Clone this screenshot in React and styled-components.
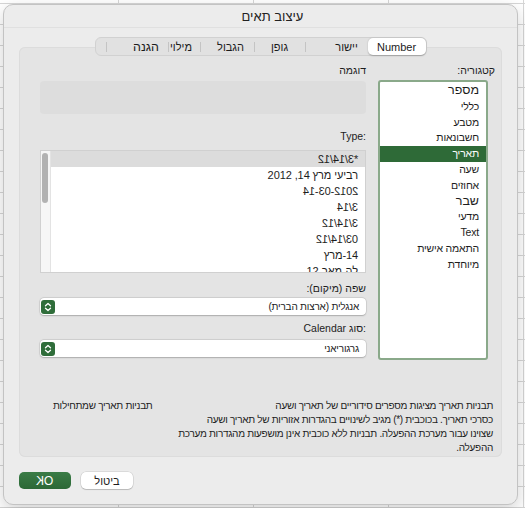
import React from 'react'
import styled, { createGlobalStyle } from 'styled-components'

const GlobalStyle = createGlobalStyle`
  html, body {
    margin: 0;
    padding: 0;
  }
  body {
    font-family: "Liberation Sans", "DejaVu Sans", Arial, sans-serif;
    color: #1d1d1d;
    background: #fff;
  }
`

// each string picks its own direction from its first strong letter
const T = ({ children }) => <Txt dir="auto">{children}</Txt>

const Stepper = () => (
	<StepperBox>
		<svg width="8" height="10" viewBox="0 0 8 10" fill="none">
			<path d="M1.5 3.8 4 1.5l2.5 2.3M1.5 6.2 4 8.5l2.5-2.3" stroke="#fff" strokeWidth="1.3" strokeLinecap="round" strokeLinejoin="round" />
		</svg>
	</StepperBox>
)

const tabs = [
	{ label: 'Number', width: 58, selected: true },
	{ label: 'יישור', width: 62, shift: 20 },
	{ label: 'גופן', width: 50, sep: true },
	{ label: 'הגבול', width: 53, sep: true, shift: 7 },
	{ label: 'מילוי', width: 31, sep: true, shift: -6 },
	{ label: 'הגנה', width: 61, sep: true, shift: 18, big: true },
	{ label: '', width: 10, sep: true },
]

const categories = [
	{ label: 'מספר', big: true },
	{ label: 'כללי' },
	{ label: 'מטבע' },
	{ label: 'חשבונאות' },
	{ label: 'תאריך', selected: true },
	{ label: 'שעה' },
	{ label: 'אחוזים' },
	{ label: 'שבר', big: true },
	{ label: 'מדעי' },
	{ label: 'Text' },
	{ label: 'התאמה אישית' },
	{ label: 'מיוחדת' },
]

const types = [
	{ flip: '*3/14/12', selected: true },
	{ text: 'רביעי מרץ 14, 2012' },
	{ flip: '2012-03-14' },
	{ flip: '3/14' },
	{ flip: '3/14/12' },
	{ flip: '03/14/12' },
	{ text: '14-מרץ' },
	{ text: 'לה-מאר-12' },
]

const App = () => {
	return (
		<Sheet>
			<GlobalStyle />
			<Dialog dir="rtl">
				<TitleBar>עיצוב תאים</TitleBar>
				<Body>
					<TabBar>
						{tabs.map((t, i) => (
							<React.Fragment key={i}>
								{t.sep && <TabSep />}
								<Tab width={t.width} shift={t.shift || 0} selected={t.selected} big={t.big}>
									<T>{t.label}</T>
								</Tab>
							</React.Fragment>
						))}
					</TabBar>
					<Panel>
						<Columns>
							<CategoryColumn>
								<CategoryLabel>
									<T>קטגוריה:</T>
								</CategoryLabel>
								<CategoryList>
									{categories.map(c => (
										<CategoryItem key={c.label} big={c.big} selected={c.selected}>
											<T>{c.label}</T>
										</CategoryItem>
									))}
								</CategoryList>
							</CategoryColumn>
							<MainColumn>
								<FieldLabel>
									<T>דוגמה</T>
								</FieldLabel>
								<SampleBox />
								<FieldLabel gap={15}>
									<T>Type:</T>
								</FieldLabel>
								<TypeList>
									<TypeRows>
										{types.map((t, i) => (
											<TypeRow key={i} selected={t.selected}>
												{t.flip ? <Flip dir="ltr">{t.flip}</Flip> : <T>{t.text}</T>}
											</TypeRow>
										))}
									</TypeRows>
									<ScrollTrack>
										<ScrollThumb />
									</ScrollTrack>
								</TypeList>
								<FieldLabel gap={8}>
									<T>שפה (מיקום):</T>
								</FieldLabel>
								<Select gap={3}>
									<T>אנגלית (ארצות הברית)</T>
									<Stepper />
								</Select>
								<FieldLabel gap={6}>
									<T>Calendar סוג:</T>
								</FieldLabel>
								<Select gap={5}>
									<T>גרגוריאני</T>
									<Stepper />
								</Select>
							</MainColumn>
						</Columns>
						<Description>
							<DescLine spread>
								<T>תבניות תאריך מציגות מספרים סידוריים של תאריך ושעה</T>
								<T>תבניות תאריך שמתחילות</T>
							</DescLine>
							<DescLine>
								<T>כסרכי תאריך. בכוכבית (*) מגיב לשינויים בהגדרות אזוריות של תאריך ושעה</T>
							</DescLine>
							<DescLine>
								<T>שצוינו עבור מערכת ההפעלה. תבניות ללא כוכבית אינן מושפעות מהגדרות מערכת</T>
							</DescLine>
							<DescLine>
								<T>ההפעלה.</T>
							</DescLine>
						</Description>
					</Panel>
					<Buttons>
						<CancelButton>
							<T>ביטול</T>
						</CancelButton>
						<OkButton>
							<Flip dir="ltr">OK</Flip>
						</OkButton>
					</Buttons>
				</Body>
			</Dialog>
		</Sheet>
	)
}

const Txt = styled.span`
	white-space: nowrap;
`

const Flip = styled.span`
	display: inline-block;
	transform: scaleX(-1);
	unicode-bidi: isolate;
`

const Sheet = styled.div`
	width: 525px;
	height: 508px;
	box-sizing: border-box;
	padding: 4px 7px 3px 3px;
	overflow: hidden;
	background-color: #fff;
	background-image: linear-gradient(#d6d6d6 1px, transparent 1px),
		linear-gradient(90deg, #d6d6d6 1px, transparent 1px);
	background-size: 135px 21px;
	background-position: -17px -18px;
`

const Dialog = styled.div`
	height: 100%;
	box-sizing: border-box;
	display: flex;
	flex-direction: column;
	background: #ececec;
	border: 1px solid #c3c3c3;
	border-radius: 10px;
	box-shadow: 0 6px 18px rgba(0, 0, 0, 0.18);
	overflow: hidden;
`

const TitleBar = styled.div`
	height: 22px;
	flex: none;
	display: flex;
	align-items: center;
	justify-content: center;
	padding-left: 24px;
	font-size: 13px;
	color: #222;
	border-bottom: 1px solid #e0e0e0;
`

const Body = styled.div`
	flex: 1;
	display: flex;
	flex-direction: column;
	padding: 9px 15px 0;
`

const TabBar = styled.div`
	align-self: center;
	display: flex;
	align-items: center;
	height: 19px;
	box-sizing: border-box;
	background: #e1e1e1;
	border: 1px solid #d1d1d1;
	border-radius: 6px;
	margin-bottom: -9px;
	position: relative;
	z-index: 1;
`

const Tab = styled.div`
	width: ${p => p.width}px;
	height: 17px;
	box-sizing: border-box;
	display: flex;
	align-items: center;
	justify-content: center;
	padding-left: ${p => (p.shift > 0 ? p.shift : 0)}px;
	padding-right: ${p => (p.shift < 0 ? -p.shift : 0)}px;
	font-size: ${p => (p.big ? 12.5 : 11)}px;
	color: #1b1b1b;
	border-radius: 5px;
	background: ${p => (p.selected ? '#fff' : 'transparent')};
	box-shadow: ${p => (p.selected ? '0 0.5px 1.5px rgba(0, 0, 0, 0.25)' : 'none')};
`

const TabSep = styled.div`
	width: 1px;
	height: 10px;
	background: #c4c4c4;
`

const Panel = styled.div`
	height: 410px;
	box-sizing: border-box;
	display: flex;
	flex-direction: column;
	background: #e4e4e4;
	border-radius: 6px;
	box-shadow: inset 0 0 0 1px #dcdcdc;
	padding-bottom: 2px;
`

const Columns = styled.div`
	display: flex;
	gap: 12px;
	padding: 16px 14px 0 21px;
`

const CategoryColumn = styled.div`
	width: 110px;
	display: flex;
	flex-direction: column;
`

const CategoryLabel = styled.div`
	height: 14px;
	line-height: 14px;
	font-size: 10.5px;
	margin-right: -7px;
	margin-bottom: 3px;
`

const CategoryList = styled.div`
	height: 280px;
	box-sizing: border-box;
	background: #fff;
	border: 2px solid #8aa98a;
	border-radius: 3px;
	padding-top: 1px;
`

const CategoryItem = styled.div`
	height: 15.8px;
	line-height: 15.8px;
	padding-right: 7px;
	font-size: ${p => (p.big ? 12.5 : 10.5)}px;
	letter-spacing: ${p => (p.big ? 0 : -0.2)}px;
	white-space: nowrap;
	background: ${p => (p.selected ? '#2e6a37' : 'transparent')};
	color: ${p => (p.selected ? '#fff' : '#1d1d1d')};
`

const MainColumn = styled.div`
	width: 326px;
	display: flex;
	flex-direction: column;
`

const FieldLabel = styled.div`
	height: 14px;
	line-height: 14px;
	font-size: 10.5px;
	margin-top: ${p => p.gap || 0}px;
`

const SampleBox = styled.div`
	height: 33px;
	margin-top: 4px;
	background: #dddddd;
	border-radius: 4px;
`

const TypeList = styled.div`
	height: 123px;
	margin-top: 7px;
	box-sizing: border-box;
	display: flex;
	background: #fff;
	border: 1px solid #d0d0d0;
	overflow: hidden;
`

const TypeRows = styled.div`
	flex: 1;
`

const TypeRow = styled.div`
	height: 16px;
	line-height: 16px;
	padding-right: 7px;
	font-size: 11px;
	letter-spacing: -0.1px;
	white-space: nowrap;
	background: ${p => (p.selected ? '#dcdcdc' : 'transparent')};
`

const ScrollTrack = styled.div`
	width: 10px;
	flex: none;
	background: #f6f6f6;
	border-right: 1px solid #e3e3e3;
	padding: 2px 2px 0;
	box-sizing: border-box;
`

const ScrollThumb = styled.div`
	width: 6px;
	height: 50px;
	border-radius: 3px;
	background: #b2b2b2;
`

const Select = styled.div`
	height: 17px;
	margin-top: ${p => p.gap}px;
	display: flex;
	align-items: center;
	justify-content: space-between;
	padding: 0 7px 0 1px;
	background: #fff;
	border-radius: 4px;
	box-shadow: 0 0 0 0.5px rgba(0, 0, 0, 0.12), 0 0.5px 1.5px rgba(0, 0, 0, 0.2);
	font-size: 10px;
	letter-spacing: -0.2px;
`

const StepperBox = styled.div`
	width: 14px;
	height: 14px;
	border-radius: 3px;
	background: #2f6d3a;
	display: flex;
	align-items: center;
	justify-content: center;
`

const Description = styled.div`
	margin-top: auto;
	padding: 0 9px 0 34px;
	font-size: 10px;
	letter-spacing: -0.3px;
	line-height: 14px;
`

const DescLine = styled.div`
	display: flex;
	justify-content: ${p => (p.spread ? 'space-between' : 'flex-start')};
`

const Buttons = styled.div`
	display: flex;
	justify-content: flex-end;
	gap: 10px;
	margin-top: 15px;
`

const ButtonBase = styled.div`
	width: 52px;
	height: 17px;
	border-radius: 5px;
	display: flex;
	align-items: center;
	justify-content: center;
`

const CancelButton = styled(ButtonBase)`
	background: #fff;
	font-size: 11px;
	box-shadow: 0 0 0 0.5px rgba(0, 0, 0, 0.15), 0 1px 1px rgba(0, 0, 0, 0.15);
`

const OkButton = styled(ButtonBase)`
	background: linear-gradient(#3a7c46, #2c6836);
	color: #fff;
	font-size: 12px;
`

export default App
